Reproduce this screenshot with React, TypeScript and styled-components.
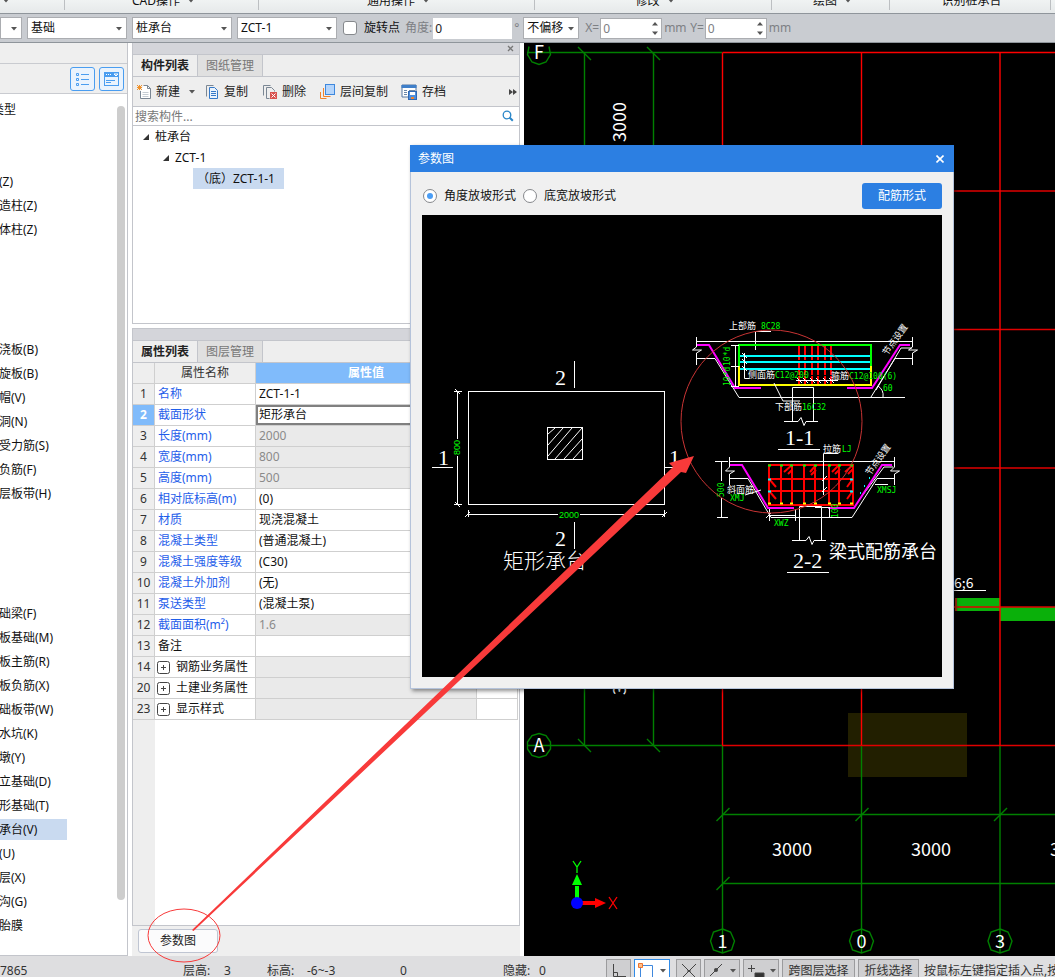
import React from "react";
import styled, { createGlobalStyle } from "styled-components";

const Global = createGlobalStyle`
  * { box-sizing: border-box; }
  body {
    margin: 0;
    overflow: hidden;
    background: #fff;
    color: #111;
    font: 12px/16px "Noto Sans", "Noto Sans CJK SC", sans-serif;
  }
  button, input, select { font: inherit; color: inherit; margin: 0; }
`;

const Page = styled.div`
  position: relative;
  display: flex;
  flex-direction: column;
  height: 100vh;
  overflow: hidden;
`;

/* ---------- ribbon ---------- */

const Ribbon = styled.header`
  display: grid;
  grid-template-columns: 65px 194px 276px 237px 118px 161px 1fr;
  flex: none;
  height: 14px;
  overflow: hidden;
  background: linear-gradient(#f0f3f3, #e6e9ea);
  border-bottom: 1px solid #8f959b;
`;

const RibbonGroup = styled.div<{ $start?: boolean }>`
  display: flex;
  justify-content: ${(p) => (p.$start ? "flex-start" : "center")};
  align-items: center;
  gap: 8px;
  height: 10px;
  padding-left: 3px;
  line-height: 16px;
  border-right: 1px solid #bcbfc2;
  white-space: nowrap;
  & > span { margin-top: -8px; }
  & > svg { margin-top: -8px; }
`;

/* ---------- option bar ---------- */

const OptionBar = styled.div`
  display: flex;
  flex: none;
  align-items: center;
  height: 29px;
  background: #c9ccd1;
  border-bottom: 1px solid #8f959b;
  white-space: nowrap;
  overflow: hidden;
`;

const SelectWrap = styled.label<{ $w: number; $gap?: number }>`
  position: relative;
  flex: none;
  width: ${(p) => p.$w}px;
  height: 22px;
  margin-right: ${(p) => p.$gap ?? 6}px;
  & > svg { position: absolute; right: 5px; top: 10px; pointer-events: none; }
`;

const Select = styled.select`
  display: block;
  width: 100%;
  height: 22px;
  padding: 0 0 0 3px;
  appearance: none;
  background: #fff;
  border: 1px solid #abadb1;
  border-radius: 0;
`;

const CheckLabel = styled.label`
  display: flex;
  align-items: center;
  gap: 7px;
  margin-right: 5px;
`;

const CheckBox = styled.input`
  appearance: none;
  width: 14px;
  height: 14px;
  background: #fff;
  border: 1px solid #85888c;
  border-radius: 3px;
`;

const FieldLabel = styled.label`
  display: flex;
  align-items: center;
  gap: 1px;
  color: #7d8084;
`;

const Field = styled.input<{ $w: number; $plain?: boolean }>`
  width: ${(p) => p.$w}px;
  height: 21px;
  padding: 0 2px;
  background: #fff;
  border: ${(p) => (p.$plain ? "0" : "1px solid #abadb1")};
  color: ${(p) => (p.$plain ? "#222" : "#7d8084")};
`;

const SpinWrap = styled.span`
  position: relative;
  display: flex;
  & > svg { position: absolute; right: 4px; top: 4px; }
`;

const Unit = styled.span<{ $w: number }>`
  width: ${(p) => p.$w}px;
  padding-left: 2px;
  color: #7d8084;
`;

/* ---------- body columns ---------- */

const Body = styled.main`
  display: grid;
  grid-template-columns: 128px 387px minmax(0, 1fr);
  flex: 1;
  min-height: 0;
`;

const Nav = styled.nav`
  display: flex;
  flex-direction: column;
  min-height: 0;
  border-right: 1px solid #c3c5cb;
  border-bottom: 1px solid #c3c5cb;
`;

const NavTop = styled.div`
  flex: none;
  height: 21px;
  background: #efefef;
  border-bottom: 1px solid #c9cbd0;
`;

const NavTools = styled.div`
  display: flex;
  flex: none;
  justify-content: flex-end;
  align-items: center;
  gap: 4px;
  height: 30px;
  padding-right: 3px;
  background: #efefef;
  border-bottom: 1px solid #c9cbd0;
`;

const ViewButton = styled.button`
  display: grid;
  place-items: center;
  width: 25px;
  height: 24px;
  padding: 0;
  background: #eaf3fd;
  border: 1px solid #4a9df0;
  border-radius: 3px;
`;

const NavBody = styled.div`
  display: flex;
  flex: 1;
  min-height: 0;
  justify-content: space-between;
  padding: 3px 2px 0 0;
`;

const NavList = styled.ul`
  flex: 1;
  margin: 0;
  padding: 0;
  list-style: none;
  overflow: hidden;
`;

const NavItem = styled.li<{ $root?: boolean; $active?: boolean }>`
  display: flex;
  align-items: center;
  height: 24px;
  white-space: nowrap;
  & > span {
    width: 67px;
    line-height: 21px;
    text-indent: ${(p) => (p.$root ? "-8px" : "-1px")};
    background: ${(p) => (p.$active ? "#c9daf0" : "transparent")};
  }
`;

const ScrollThumb = styled.div`
  width: 8px;
  margin: 9px 0 55px;
  background: #cdcdcd;
  border-radius: 4px;
`;

const Center = styled.section`
  display: flex;
  flex-direction: column;
  min-height: 0;
  margin-left: 4px;
  width: 388px;
`;

const Pane = styled.div<{ $grow?: boolean }>`
  display: flex;
  flex-direction: column;
  flex: ${(p) => (p.$grow ? "1" : "none")};
  min-height: 0;
  border: 1px solid #c3c5cb;
  border-top: 0;
`;

const PaneTitle = styled.div`
  display: flex;
  justify-content: flex-end;
  align-items: center;
  height: 12px;
  padding-right: 5px;
  background: #d4d5da;
  border-bottom: 1px solid #c3c5cb;
`;

const IconButton = styled.button`
  display: flex;
  padding: 0;
  border: 0;
  background: none;
`;

const Tabs = styled.div`
  display: flex;
  height: 22px;
  background: #eee;
  border-bottom: 1px solid #c3c5cb;
`;

const Tab = styled.button<{ $active?: boolean }>`
  width: 65px;
  padding: 0;
  border: 0;
  border-right: 1px solid #c3c5cb;
  background: ${(p) => (p.$active ? "#eee" : "#e0e0e0")};
  color: ${(p) => (p.$active ? "#222" : "#777")};
  font-weight: ${(p) => (p.$active ? 700 : 400)};
`;

const Toolbar = styled.div`
  display: flex;
  align-items: center;
  height: 30px;
  padding-left: 4px;
  background: #eee;
  border-bottom: 1px solid #c3c5cb;
`;

const Tool = styled.button<{ $w: number }>`
  display: flex;
  flex: none;
  align-items: center;
  gap: 4px;
  width: ${(p) => p.$w}px;
  padding: 0;
  border: 0;
  background: none;
  white-space: nowrap;
  color: #222;
`;

const Search = styled.label`
  display: flex;
  align-items: center;
  height: 19px;
  padding: 0 5px 0 2px;
  background: #fff;
  border-bottom: 1px solid #c3c5cb;
`;

const SearchInput = styled.input`
  flex: 1;
  height: 18px;
  padding: 0;
  border: 0;
  background: none;
  &::placeholder { color: #777; opacity: 1; }
`;

const Tree = styled.div`
  height: 197px;
  background: #fff;
`;

const TreeRow = styled.div<{ $level: number }>`
  display: flex;
  align-items: center;
  gap: 6px;
  height: 21px;
  padding-left: ${(p) => 10 + p.$level * 20}px;
`;

const TreeChosen = styled.span`
  margin-left: 10px;
  padding: 0 9px 0 4px;
  line-height: 21px;
  background: #c9daf0;
`;

const Splitter = styled.div`
  height: 5px;
  border-bottom: 1px solid #c3c5cb;
`;

const GridArea = styled.div`
  flex: 1;
  min-height: 0;
  overflow: hidden;
  background: linear-gradient(to right, #eee 22px, #fff 22px);
`;

const Grid = styled.table`
  width: 385px;
  table-layout: fixed;
  border-collapse: separate;
  border-spacing: 0;
  th, td {
    height: 21px;
    padding: 0 0 0 3px;
    line-height: 18px;
    text-align: left;
    font-weight: 400;
    white-space: nowrap;
    border-right: 1px solid #cfcfcf;
    border-bottom: 1px solid #cfcfcf;
  }
`;

const Head = styled.th<{ $on?: boolean }>`
  && {
    padding: 0;
    text-align: center;
    background: ${(p) => (p.$on ? "#80bbfb" : "#eee")};
    color: ${(p) => (p.$on ? "#fff" : "#333")};
    font-weight: ${(p) => (p.$on ? 700 : 400)};
  }
`;

const Num = styled.th<{ $on?: boolean }>`
  && {
    padding: 0;
    text-align: center;
    background: ${(p) => (p.$on ? "#80bbfb" : "#eee")};
    color: ${(p) => (p.$on ? "#fff" : "#333")};
    font-weight: ${(p) => (p.$on ? 700 : 400)};
  }
`;

const Name = styled.td<{ $link?: boolean }>`
  background: #fff;
  color: ${(p) => (p.$link ? "#1f5eea" : "#111")};
  & > span { display: flex; align-items: center; gap: 6px; }
  svg { margin-left: -1px; }
`;

const Value = styled.td<{ $off?: boolean; $on?: boolean }>`
  background: ${(p) => (p.$off ? "#eaeaea" : "#fff")};
  color: ${(p) => (p.$off ? "#8a8a8a" : "#111")};
  box-shadow: ${(p) => (p.$on ? "0 0 0 2px #808080 inset" : "none")};
`;

const Footer = styled.div`
  flex: none;
  height: 30px;
  padding: 3px 6px;
  background: #efefef;
`;

const ParamButton = styled.button`
  width: 80px;
  height: 24px;
  padding: 0;
  background: #fbfbfc;
  border: 1px solid #bfc5d2;
  border-radius: 3px;
  color: #222;
`;

const CanvasBox = styled.section`
  min-width: 0;
  min-height: 0;
  margin-left: 9px;
  overflow: hidden;
  background: #000;
  & > svg { display: block; }
`;

/* ---------- status bar ---------- */

const Status = styled.footer`
  display: flex;
  flex: none;
  align-items: flex-start;
  height: 21px;
  overflow: hidden;
  background: #dedee0;
  color: #333;
  white-space: nowrap;
`;

const StatusText = styled.span<{ $w: number }>`
  flex: none;
  width: ${(p) => p.$w}px;
  padding-top: 7px;
`;

const StatusButton = styled.button<{ $w: number; $gap: number; $on?: boolean }>`
  display: flex;
  flex: none;
  justify-content: space-around;
  align-items: center;
  width: ${(p) => p.$w}px;
  height: 24px;
  margin: 3px ${(p) => p.$gap}px 0 0;
  padding: 0;
  background: ${(p) => (p.$on ? "#fff" : "#cfcfd1")};
  border: 1px solid ${(p) => (p.$on ? "#2f8be8" : "#9b9b9d")};
`;

/* ---------- dialog ---------- */

const Dialog = styled.div`
  position: absolute;
  left: 410px;
  top: 145px;
  width: 544px;
  background: #f0f0f0;
  border: 1px solid #b5c3da;
  border-top: 0;
  box-shadow: 2px 2px 4px rgba(0, 0, 0, 0.45);
`;

const DialogTitle = styled.div`
  display: flex;
  justify-content: space-between;
  align-items: center;
  height: 27px;
  margin: 0 -1px;
  padding: 0 10px 0 8px;
  background: #2c7fe2;
  color: #fff;
`;

const DialogOptions = styled.div`
  display: flex;
  align-items: center;
  height: 43px;
  padding: 4px 11px 0 12px;
`;

const RadioLabel = styled.label`
  display: flex;
  align-items: center;
  gap: 7px;
  margin-right: 7px;
`;

const Radio = styled.input`
  appearance: none;
  display: grid;
  place-items: center;
  width: 14px;
  height: 14px;
  background: #fff;
  border: 1px solid #86888c;
  border-radius: 50%;
  &:checked::before {
    content: "";
    width: 6px;
    height: 6px;
    border-radius: 50%;
    background: #4a9df5;
  }
`;

const Primary = styled.button`
  width: 80px;
  height: 26px;
  margin-left: auto;
  padding: 0;
  border: 0;
  border-radius: 3px;
  background: #2c7fe2;
  color: #fff;
`;

const Drawing = styled.div`
  margin: 0 11px 11px;
  background: #000;
  & > svg { display: block; }
`;

const Overlay = styled.svg`
  position: absolute;
  inset: 0;
  pointer-events: none;
`;

/* ---------- small drawings ---------- */

const Caret = ({ c = "#555" }: { c?: string }) => (
  <svg width="6" height="4" viewBox="0 0 6 4"><path d="M0 0h6L3 3.5z" fill={c} /></svg>
);

const Spin = () => (
  <svg width="6" height="13" viewBox="0 0 6 13"><path d="M0 3.5L3 0l3 3.5zM0 9.5h6L3 13z" fill="#555" /></svg>
);

const Branch = () => (
  <svg width="6" height="6" viewBox="0 0 6 6"><path d="M0 6h6V0z" fill="#333" /></svg>
);

const NewIcon = () => (
  <svg width="15" height="16" viewBox="0 0 15 16" fill="none">
    <path d="M6.5 1.5h4l3 3v10h-10V7" fill="#fff" stroke="#7b8794" />
    <path d="M10.5 1.5v3h3" stroke="#7b8794" />
    <path d="M5.500 8.500h6M5.500 10.500h6M5.500 12.500h6" stroke="#c5ccd3" />
    <path d="M0 1l5 5M5 1L0 6M2.500 1v5M0 3.500h5" stroke="#f0922b" />
  </svg>
);

const CopyIcon = () => (
  <svg width="15" height="16" viewBox="0 0 15 16" fill="none" stroke="#3579c8">
    <path d="M1.500 12.500v-11h7" stroke="#7b8794" />
    <path d="M4.500 3.500h5l3 3v8h-8z" fill="#eaf3fd" />
    <path d="M6 7.500h5M6 9.500h5M6 11.500h5" />
  </svg>
);

const DeleteIcon = () => (
  <svg width="16" height="16" viewBox="0 0 16 16" fill="none" stroke="#7b8794">
    <path d="M1.500 11.500v-10h7M4.500 14.500v-11h5l3 3v1M4.500 14.500h3" />
    <rect x="8" y="8" width="7" height="7" fill="#d9534f" stroke="none" />
    <path d="M9.500 9.500l4 4M13.500 9.500l-4 4" stroke="#fff" />
  </svg>
);

const LayerIcon = () => (
  <svg width="16" height="16" viewBox="0 0 16 16" fill="none">
    <rect x="5.500" y=".5" width="9" height="10" fill="#b5d5fb" stroke="#3f88dd" />
    <path d="M3.500 4v8.500h7" stroke="#f0822b" />
    <path d="M.5 8v6.500h6" stroke="#f0822b" />
  </svg>
);

const SaveIcon = () => (
  <svg width="17" height="16" viewBox="0 0 17 16" fill="none">
    <path d="M1 1h14v12H1z" fill="#fff" stroke="#5577a0" />
    <path d="M.5 1h15v3H.5z" fill="#3f7fc9" />
    <path d="M3 6.500h3M8 6.500h6M3 8.500h3M3 10.500h3" stroke="#6b87a8" />
    <rect x="7.500" y="7.500" width="8" height="8" fill="#4f8fdc" stroke="#2f69b4" />
    <path d="M9 8h5v3H9z" fill="#fff" />
    <path d="M10 13h3v2h-3z" fill="#f0822b" />
  </svg>
);

const PlusBox = () => (
  <svg width="13" height="13" viewBox="0 0 13 13" fill="none" stroke="#444">
    <rect x=".5" y=".5" width="12" height="12" rx="2" />
    <path d="M4 6.500h5M6.500 4v5" />
  </svg>
);

/* ---------- data ---------- */

const navRows: string[] = [
  "类型", "", "", "(Z)", "造柱(Z)", "体柱(Z)", "", "", "", "",
  "浇板(B)", "旋板(B)", "帽(V)", "洞(N)", "受力筋(S)", "负筋(F)", "层板带(H)",
  "", "", "", "", "础梁(F)", "板基础(M)", "板主筋(R)", "板负筋(X)", "础板带(W)",
  "水坑(K)", "墩(Y)", "立基础(D)", "形基础(T)", "承台(V)", "(U)", "层(X)", "沟(G)", "胎膜",
];

type Prop = { n: number; name: string; value?: string; off?: boolean; plain?: boolean; group?: boolean };

const props: Prop[] = [
  { n: 1, name: "名称", value: "ZCT-1-1" },
  { n: 2, name: "截面形状", value: "矩形承台" },
  { n: 3, name: "长度(mm)", value: "2000", off: true },
  { n: 4, name: "宽度(mm)", value: "800", off: true },
  { n: 5, name: "高度(mm)", value: "500", off: true },
  { n: 6, name: "相对底标高(m)", value: "(0)" },
  { n: 7, name: "材质", value: "现浇混凝土" },
  { n: 8, name: "混凝土类型", value: "(普通混凝土)" },
  { n: 9, name: "混凝土强度等级", value: "(C30)" },
  { n: 10, name: "混凝土外加剂", value: "(无)" },
  { n: 11, name: "泵送类型", value: "(混凝土泵)" },
  { n: 12, name: "截面面积(m²)", value: "1.6", off: true },
  { n: 13, name: "备注", plain: true },
  { n: 14, name: "钢筋业务属性", off: true, plain: true, group: true },
  { n: 20, name: "土建业务属性", off: true, plain: true, group: true },
  { n: 23, name: "显示样式", off: true, plain: true, group: true },
];

const columns = [722.5, 861.5, 1000];

/* ---------- model view ---------- */

const ModelView = () => (
  <CanvasBox>
    <svg width="100%" height="100%" fill="none" fontFamily="'Noto Sans CJK SC', sans-serif" fontSize="18">
      <g transform="translate(-524 -43)">
        <rect x="848" y="713" width="119" height="64" fill="#221f00" />
        <g fill="#0ab00a">
          <rect x="955" y="598" width="45" height="13" />
          <rect x="1000" y="607" width="900" height="14" />
        </g>
        <g stroke="#008000" strokeWidth="1.400">
          <path d="M527 52.500H722M527 745.500H722M584.500 52v693M653.500 52v693" />
          <path d="M722.500 745v208M861.500 745v208M1000 745v208" />
          <path d="M722 814.500H1900M722 883.500H1900" />
          <path d="M578 47l13 13M647 47l13 13M578 739l13 13M647 739l13 13" />
          {columns.map((x) => <path key={x} d={`M${x - 6} 821l13-13`} />)}
          <path d="M716.500 890l13-13" />
          <path d="M529 46.500l-1.500 8 4.500 7.500 7 2.500 7-2.500 4.500-7.500-1.500-8" />
          <polygon points="539,733.500 546,735.500 550.500,742 550.500,749 546,755.500 539,757.500 532,755.500 527.500,749 527.500,742 532,735.500" />
          {columns.map((x) => (
            <polygon key={x} points={[[0, -12], [8, -9], [12, 0], [9, 9], [0, 12], [-9, 9], [-12, 0], [-9, -9]].map(([a, b]) => `${x + a},${941 + b}`).join(" ")} />
          ))}
        </g>
        <g stroke="#f00" strokeWidth="1.400">
          <path d="M722 191H1900M722 329.500H1900M722 468H1900M722 607H1900M722 745.500H1900" stroke="#e00000" />
          <path d="M722.500 52.500H1900M722.500 52.500V745M861.500 52.500V745M1000 52.500V745.500" />
        </g>
        <path d="M956 598v13" stroke="#a33010" strokeWidth="2" />
        <path d="M954 590.500h32" stroke="#fff" />
        <g fill="#fff" textAnchor="middle">
          <text x="539" y="59">F</text>
          <text x="539" y="752">A</text>
          <text x="722.500" y="948">1</text>
          <text x="861.500" y="948">0</text>
          <text x="1000" y="948">3</text>
          <text x="792" y="856">3000</text>
          <text x="931" y="856">3000</text>
          <text x="1070" y="856">3000</text>
          <text transform="translate(626 122) rotate(-90)">3000</text>
          <text transform="translate(626 675) rotate(-90)">3000</text>
          <text x="954" y="588" fontSize="14" textAnchor="start">6;6</text>
        </g>
        <path d="M577 898v-12" stroke="#0f0" strokeWidth="4" />
        <path d="M572 885l5-11 5 11z" fill="#0f0" />
        <path d="M573 861l4 6 4-6M577 867v6" stroke="#0f0" strokeWidth="1.300" />
        <path d="M582 903h13" stroke="#f00" strokeWidth="4" />
        <path d="M595 898l11 5-11 5z" fill="#f00" />
        <path d="M609 897l8 12M617 897l-8 12" stroke="#f00" strokeWidth="1.300" />
        <circle cx="577" cy="903" r="6" fill="#00f" />
      </g>
    </svg>
  </CanvasBox>
);

/* ---------- section drawing in the dialog ---------- */

const SectionDrawing = () => (
  <Drawing>
    <svg width="520" height="462" viewBox="422 215 520 462" fill="none" stroke="#fff" fontFamily="'DejaVu Sans Mono', 'Noto Sans CJK SC', monospace" fontSize="8">
      {/* plan */}
      <path d="M574.500 361v27M574.500 522v27M432 467.500h21M664 467.500h18" />
      <rect x="468.500" y="391.500" width="196" height="113" />
      <rect x="547.500" y="427.500" width="35" height="32" />
      <path d="M548 434l7-6M548 445l15-17M548 456l24-28M555 459l27-31M564 459l18-20M573 459l9-10" />
      <path d="M457.500 391v48M457.500 456v49M454 391.500h8M454 504.500h8M455 389l5 5M455 502l5 5" />
      <path d="M467 514.500h91M580 514.500h85M468.500 510v7M664.500 510v7M465 517l5-5M662 517l5-5" />

      {/* section 1-1 */}
      <path d="M755.500 332v18M755 331.500h16" />
      <path d="M696 341.500h217M696.500 337v10l-4 3h9l-5 3v12M912.500 337v10l-4 3h9l-5 3v12" />
      <path d="M696 358.500h19l24 39h166M871 397l24-38.500h17M876 390l25-42h11" />
      <path d="M697 345h12l26 43h26M847 388h25l28-43h10" stroke="#f0f" strokeWidth="2" />
      <path d="M799 346v38M805 346v38M812 346v38M818 346v38M825 346v38M831 346v38" stroke="#f00" strokeWidth="2" strokeDasharray="14 1" />
      <path d="M739 356h132M739 362h132M739 369h132" stroke="#0ff" strokeWidth="2" />
      <path d="M739 366v-21h132v21" stroke="#0f0" strokeWidth="2" />
      <path d="M739 366v19h132v-19" stroke="#ff0" strokeWidth="2" />
      <path d="M735.500 345v41M731 345.500h8M731 366.500h8M731 386.500h8M744.500 353v25.500h5M742 353l5 5M742 359l5 5M742 366l5 5" />
      <path d="M796 380.500h42M797 378l5 5M803 378l5 5M810 378l5 5M816 378l5 5M823 378l5 5M829 378l5 5" />
      <path d="M774 383l9 18h17M878 386q6 4 5 11" />
      <path d="M792.500 421v-33.500h21V421M784 421.500h14l3-4 3 8 2-4h12M778 449.500h42" />

      {/* section 2-2 */}
      <path d="M729 461.500h166M729.500 457v10l-4 4h9l-5 3v11M894.500 457v10l-4 4h9l-5 3v11" />
      <path d="M729 478.500h19l23 39h81l25-39h17M859 500l25-33h9M875 484.500h13" />
      <g stroke="#f00" strokeWidth="2">
        <rect x="769" y="465" width="84" height="40" />
        <path d="M781 465v40M792 465v40M804 465v40M815 465v40M829 465v40M839 465v40M769 479h84M769 491h84" />
        <path d="M784 472l8-7M788 474l4-4M810 472l6-7M811 475l5-5M832 472l7-7M835 474l5-5M845 472l8-7M848 474l5-5M770 480l6 7M770 492l6 7M852 480l-5 7M852 492l-5 7" />
      </g>
      <path d="M730 465h12l26 43h26M828 508h26l28-43h10" stroke="#f0f" strokeWidth="2" />
      <path d="M768 465.500h3M780 465.500h3M790 465.500h3M803 465.500h3M814 465.500h3M828 465.500h3M838 465.500h3M850 465.500h3" stroke="#0f0" strokeWidth="2" />
      <path d="M768 479.500h3M768 491.500h3M850 479.500h3M850 491.500h3M869 478h1M864 486h1M860 493h1" stroke="#0ff" strokeWidth="2" />
      <path d="M768 503.500h3M780 503.500h3M790 503.500h3M803 503.500h3M814 503.500h3M828 503.500h3M838 503.500h3M850 503.500h3" stroke="#ff0" strokeWidth="2" />
      <path d="M823.500 495v-41.500h15M822 481l5-5M822 492l5-5" />
      <path d="M721.500 461v20M721.500 498v19M715 461.500h13M717 517.500h11M745 495l16-5" />
      <path d="M769 515.500h27M769.500 509v12M795.500 509v12M766 518l5-5M829.500 507v11M815 507.500h14" />
      <path d="M799.500 540v-33.500h22V540M792 540.500h14l3-4 3 8 2-4h12M787 572.500h42" />

      <g stroke="none" fill="#fff">
        <g fontFamily="'Liberation Serif', serif" fontSize="22">
          <text x="555" y="385">2</text>
          <text x="555" y="546">2</text>
          <text x="438" y="465">1</text>
          <text x="669" y="465">1</text>
          <text x="785" y="445">1-1</text>
          <text x="793" y="568">2-2</text>
        </g>
        <g fontFamily="'Noto Sans CJK SC', sans-serif" fontSize="9">
          <text x="503" y="568" fontSize="21" fontWeight="300">矩形承台</text>
          <text x="829" y="558" fontSize="18">梁式配筋承台</text>
          <text x="729" y="329">上部筋</text>
          <text x="748" y="378">侧面筋</text>
          <text x="831" y="379">箍筋</text>
          <text x="775" y="410">下部筋</text>
          <text x="823" y="452">拉筋</text>
          <text x="727" y="493">斜面筋</text>
          <text transform="translate(887 356) rotate(-54)">节点设置</text>
          <text transform="translate(870 476) rotate(-54)">节点设置</text>
        </g>
        <g fill="#0f0">
          <text x="761" y="329">8C28</text>
          <text x="775" y="378">C12@200</text>
          <text x="849" y="379">C12@100(6)</text>
          <text x="802" y="410">16C32</text>
          <text x="883" y="391">60</text>
          <text x="842" y="452">LJ</text>
          <text x="730" y="501">XMJ</text>
          <text x="877" y="493">XMSJ</text>
          <text x="774" y="526">XWZ</text>
          <text transform="translate(730 366) rotate(-90)">10*d</text>
          <text transform="translate(730 386) rotate(-90)">10*d</text>
          <text transform="translate(724 497) rotate(-90)">500</text>
          <text transform="translate(838 518) rotate(-90)">100</text>
          <g fontFamily="'Liberation Sans', sans-serif" fontSize="9">
            <text x="559" y="518">2000</text>
            <text transform="translate(460 455) rotate(-90)">800</text>
          </g>
        </g>
      </g>
    </svg>
  </Drawing>
);

export default function App() {
  return (
    <>
      <Global />
      <Page>
        <Ribbon>
          <RibbonGroup $start><Caret /></RibbonGroup>
          {["CAD操作", "通用操作", "修改", "绘图"].map((t) => (
            <RibbonGroup key={t}><span>{t}</span><Caret /></RibbonGroup>
          ))}
          <RibbonGroup><span>识别桩承台</span></RibbonGroup>
        </Ribbon>

        <OptionBar>
          <SelectWrap $w={22} $gap={5}><Select aria-label="楼层" /><Caret /></SelectWrap>
          <SelectWrap $w={100} $gap={5}><Select aria-label="构件分类"><option>基础</option></Select><Caret /></SelectWrap>
          <SelectWrap $w={100} $gap={5}><Select aria-label="构件类型"><option>桩承台</option></Select><Caret /></SelectWrap>
          <SelectWrap $w={100}><Select aria-label="构件"><option>ZCT-1</option></Select><Caret /></SelectWrap>
          <CheckLabel><CheckBox type="checkbox" />旋转点</CheckLabel>
          <FieldLabel>角度:<Field $w={79} $plain defaultValue="0" /></FieldLabel>
          <Unit $w={11}>°</Unit>
          <SelectWrap $w={56}><Select aria-label="偏移"><option>不偏移</option></Select><Caret /></SelectWrap>
          <FieldLabel>X=<SpinWrap><Field $w={62} defaultValue="0" /><Spin /></SpinWrap></FieldLabel>
          <Unit $w={28}>mm</Unit>
          <FieldLabel>Y=<SpinWrap><Field $w={62} defaultValue="0" /><Spin /></SpinWrap></FieldLabel>
          <Unit $w={28}>mm</Unit>
        </OptionBar>

        <Body>
          <Nav>
            <NavTop />
            <NavTools>
              <ViewButton aria-label="列表视图">
                <svg width="14" height="14" viewBox="0 0 14 14" fill="none" stroke="#4a9df0">
                  <path d="M.5 1.500h2v2h-2zM.5 6.500h2v2h-2zM.5 11.500h2v2h-2zM5 2.500h8M5 7.500h8M5 12.500h8" />
                </svg>
              </ViewButton>
              <ViewButton aria-label="详细视图">
                <svg width="15" height="14" viewBox="0 0 15 14" fill="none" stroke="#4a9df0">
                  <rect x=".5" y=".5" width="14" height="13" />
                  <path d="M0 0h15v5H0z" fill="#4a9df0" stroke="none" />
                  <path d="M2 2.500h1M4 2.500h1M6 2.500h1M10 2h4l-2 2z" stroke="#fff" />
                  <path d="M2 8.500h9M2 10.500h5" />
                </svg>
              </ViewButton>
            </NavTools>
            <NavBody>
              <NavList>
                {navRows.map((t, i) => (
                  <NavItem key={i} $root={i === 0} $active={t === "承台(V)"}><span>{t}</span></NavItem>
                ))}
              </NavList>
              <ScrollThumb />
            </NavBody>
          </Nav>

          <Center>
            <Pane>
              <PaneTitle>
                <IconButton aria-label="关闭">
                  <svg width="7" height="7" viewBox="0 0 7 7" stroke="#777" strokeWidth="1.300"><path d="M1 1l5 5M6 1L1 6" /></svg>
                </IconButton>
              </PaneTitle>
              <Tabs><Tab $active>构件列表</Tab><Tab>图纸管理</Tab></Tabs>
              <Toolbar>
                <Tool $w={68}><NewIcon />新建<svg width="12" height="4" viewBox="0 0 12 4"><path d="M5 0h6L8 3.500z" fill="#555" /></svg></Tool>
                <Tool $w={57}><CopyIcon />复制</Tool>
                <Tool $w={58}><DeleteIcon />删除</Tool>
                <Tool $w={81}><LayerIcon />层间复制</Tool>
                <Tool $w={108}><SaveIcon />存档</Tool>
                <IconButton aria-label="更多">
                  <svg width="8" height="6" viewBox="0 0 8 6" fill="#444"><path d="M0 0l4 3-4 3zM4 0l4 3-4 3z" /></svg>
                </IconButton>
              </Toolbar>
              <Search>
                <SearchInput aria-label="搜索构件" placeholder="搜索构件..." />
                <svg width="12" height="12" viewBox="0 0 12 12" fill="none" stroke="#2a86c8">
                  <circle cx="5" cy="5" r="3.800" strokeWidth="1.300" /><path d="M7.800 7.800l3 3" strokeWidth="2" />
                </svg>
              </Search>
              <Tree>
                <TreeRow $level={0}><Branch />桩承台</TreeRow>
                <TreeRow $level={1}><Branch />ZCT-1</TreeRow>
                <TreeRow $level={2}><TreeChosen>（底）ZCT-1-1</TreeChosen></TreeRow>
              </Tree>
            </Pane>
            <Splitter />
            <Pane $grow>
              <PaneTitle />
              <Tabs><Tab $active>属性列表</Tab><Tab>图层管理</Tab></Tabs>
              <GridArea>
                <Grid>
                  <colgroup><col style={{ width: 22 }} /><col style={{ width: 101 }} /><col style={{ width: 221 }} /><col /></colgroup>
                  <thead>
                    <tr><Head /><Head>属性名称</Head><Head $on>属性值</Head><Head /></tr>
                  </thead>
                  <tbody>
                    {props.map((p) => (
                      <tr key={p.n}>
                        <Num scope="row" $on={p.n === 2}>{p.n}</Num>
                        <Name $link={!p.plain}><span>{p.group && <PlusBox />}{p.name}</span></Name>
                        <Value $off={p.off} $on={p.n === 2}>{p.value}</Value>
                        <td />
                      </tr>
                    ))}
                  </tbody>
                </Grid>
              </GridArea>
            </Pane>
            <Footer><ParamButton>参数图</ParamButton></Footer>
          </Center>

          <ModelView />
        </Body>

        <Status>
          <StatusText $w={183}>7865</StatusText>
          <StatusText $w={41}>层高:</StatusText>
          <StatusText $w={43}>3</StatusText>
          <StatusText $w={40}>标高:</StatusText>
          <StatusText $w={93}>-6~-3</StatusText>
          <StatusText $w={103}>0</StatusText>
          <StatusText $w={36}>隐藏:</StatusText>
          <StatusText $w={67}>0</StatusText>
          <StatusButton $w={25} $gap={3} aria-label="正交">
            <svg width="14" height="14" viewBox="0 0 14 14" fill="none" stroke="#444"><path d="M1.500 0v12.500H14M1.500 8.500h4v4" /></svg>
          </StatusButton>
          <StatusButton $w={36} $gap={6} $on aria-label="捕捉">
            <svg width="16" height="16" viewBox="0 0 16 16" fill="none" stroke="#3f88dd"><path d="M2.500 16V2.500h12V16" /><path d="M.5.5h4v4h-4z" fill="#fbc08c" stroke="#f0722b" /></svg>
            <Caret />
          </StatusButton>
          <StatusButton $w={25} $gap={3} aria-label="交点">
            <svg width="16" height="16" viewBox="0 0 16 16" fill="none" stroke="#444"><path d="M1 1l14 14M15 1L1 15M6 8h4" /></svg>
          </StatusButton>
          <StatusButton $w={36} $gap={3} aria-label="中点">
            <svg width="16" height="16" viewBox="0 0 16 16" fill="none" stroke="#444"><path d="M2 13L14 1M1 14.500h13" /><circle cx="8" cy="7" r="2" fill="#444" stroke="none" /></svg>
            <Caret />
          </StatusButton>
          <StatusButton $w={36} $gap={3} aria-label="输入">
            <svg width="18" height="16" viewBox="0 0 18 16" fill="none" stroke="#444"><path d="M1 5.500h7M4.500 2v7" /><path d="M8 10h9v5H8z" fill="#333" /></svg>
            <Caret />
          </StatusButton>
          <StatusButton $w={73} $gap={3}>跨图层选择</StatusButton>
          <StatusButton $w={61} $gap={5}>折线选择</StatusButton>
          <StatusText $w={160}>按鼠标左键指定插入点,按右键</StatusText>
        </Status>

        <Dialog role="dialog" aria-label="参数图">
          <DialogTitle>
            参数图
            <IconButton aria-label="关闭">
              <svg width="8" height="8" viewBox="0 0 8 8" stroke="#fff" strokeWidth="1.600"><path d="M.5.5l7 7M7.500.5l-7 7" /></svg>
            </IconButton>
          </DialogTitle>
          <DialogOptions>
            <RadioLabel><Radio type="radio" name="slope" defaultChecked />角度放坡形式</RadioLabel>
            <RadioLabel><Radio type="radio" name="slope" />底宽放坡形式</RadioLabel>
            <Primary>配筋形式</Primary>
          </DialogOptions>
          <SectionDrawing />
        </Dialog>

        <Overlay width="100%" height="100%" fill="none" stroke="#f83a3a">
          <ellipse cx="771.500" cy="421.500" rx="90.500" ry="91.500" stroke="#c83434" />
          <ellipse cx="184" cy="935.500" rx="36" ry="26.500" />
          <path d="M192 930L673 467L669 463L694 456L686 473L681 472L193.500 931z" fill="#f83a3a" stroke="none" />
        </Overlay>
      </Page>
    </>
  );
}
